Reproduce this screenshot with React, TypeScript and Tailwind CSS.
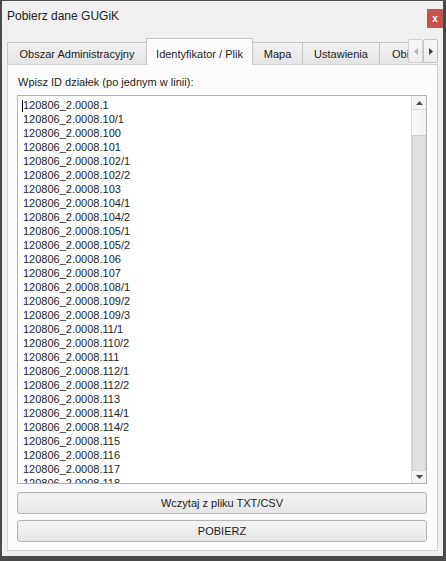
import React from "react";

const ids = [
  "1", "10/1", "100", "101", "102/1", "102/2", "103", "104/1", "104/2", "105/1",
  "105/2", "106", "107", "108/1", "109/2", "109/3", "11/1", "110/2", "111", "112/1",
  "112/2", "113", "114/1", "114/2", "115", "116", "117", "118", "119", "12/1",
];

const font = { fontFamily: '"Liberation Sans", Arial, sans-serif' };

function Arrow({ dir, color }: { dir: "up" | "down" | "left" | "right"; color: string }) {
  const pts = {
    up: "0,4 3.5,0 7,4",
    down: "0,0 3.5,4 7,0",
    left: "4,0 4,7 0,3.5",
    right: "0,0 0,7 4,3.5",
  }[dir];
  const horiz = dir === "left" || dir === "right";
  return (
    <svg width={horiz ? 4 : 7} height={horiz ? 7 : 4} viewBox={horiz ? "0 0 4 7" : "0 0 7 4"}>
      <polygon points={pts} fill={color} />
    </svg>
  );
}

export default function App() {
  return (
    <div
      className="w-[446px] h-[561px] bg-[#f0f0f0] border-t border-l-2 border-r-[3px] border-b-[5px] border-[#4a4a4a] flex flex-col text-[11px] text-[#1c1c1c] overflow-hidden"
      style={font}
    >
      {/* title bar */}
      <div className="h-[37px] flex items-start justify-between pt-[8px] pl-[5px]">
        <span className="text-[12px] leading-[14px] text-[#222]">Pobierz dane GUGiK</span>
        <div className="w-[16px] h-[19px] bg-[#c75050] flex items-center justify-center text-white text-[10px] font-bold leading-none">
          x
        </div>
      </div>

      {/* tabs */}
      <div className="h-[26px] ml-[5px] flex items-end relative z-10">
        <div className="w-[139px] h-[22px] border-l border-t border-[#c4c4c4] bg-gradient-to-b from-[#f1f1f1] to-[#e5e5e5] flex items-end justify-center pb-[3px] leading-[14px]">
          Obszar Administracyjny
        </div>
        <div className="w-[107px] h-[27px] -mb-px border-l border-t border-r border-[#c4c4c4] bg-[#fcfcfc] flex items-end justify-center pb-[4px] leading-[14px]">
          Identyfikator / Plik
        </div>
        <div className="w-[50px] h-[22px] border-t border-r border-[#c4c4c4] bg-gradient-to-b from-[#f1f1f1] to-[#e5e5e5] flex items-end justify-center pb-[3px] leading-[14px]">
          Mapa
        </div>
        <div className="w-[77px] h-[22px] border-t border-r border-[#c4c4c4] bg-gradient-to-b from-[#f1f1f1] to-[#e5e5e5] flex items-end justify-center pb-[3px] leading-[14px]">
          Ustawienia
        </div>
        <div className="w-[28px] h-[22px] border-t border-[#c4c4c4] bg-gradient-to-b from-[#f1f1f1] to-[#e5e5e5] flex items-end pl-[12px] pb-[3px] leading-[14px] overflow-hidden whitespace-nowrap">
          Obiekty
        </div>
        <div className="self-start mt-[1px] flex">
          <div className="w-[15px] h-[24px] border border-[#cfcfcf] rounded-t-[2px] bg-gradient-to-b from-[#f7f7f7] to-[#ececec] flex items-center justify-center">
            <Arrow dir="left" color="#b5b5b5" />
          </div>
          <div className="w-[15px] h-[24px] border border-[#c4c4c4] rounded-t-[2px] bg-gradient-to-b from-[#f7f7f7] to-[#ececec] flex items-center justify-center">
            <Arrow dir="right" color="#3c3c3c" />
          </div>
        </div>
      </div>

      {/* pane */}
      <div className="ml-[5px] w-[431px] h-[487px] border border-[#d2d2d2] bg-[#fcfcfc] flex flex-col pt-[10px] pl-[9px] pr-[10px] pb-[8px]">
        <div className="leading-[14px] pl-[1px]">Wpisz ID działek (po jednym w linii):</div>

        <div className="mt-[6px] w-[410px] h-[389px] border border-[#b4b4b4] bg-white flex">
          <div className="relative flex-1 overflow-hidden pt-[2px] pl-[5px]">
            <span className="absolute left-[4px] top-[4px] w-px h-[12px] bg-black" />
            {ids.map((id) => (
              <div key={id} className="leading-[14px] whitespace-nowrap text-[#1e1e2a]">
                120806_2.0008.{id}
              </div>
            ))}
          </div>
          {/* scrollbar */}
          <div className="w-[15px] flex flex-col border-l border-[#dadada]">
            <div className="h-[14px] bg-[#f4f4f4] border-b border-[#d6d6d6] flex items-center justify-center">
              <Arrow dir="up" color="#4a4a4a" />
            </div>
            <div className="h-[26px] bg-gradient-to-r from-[#fafafa] to-[#f1f1f1] border-b border-[#cfcfcf]" />
            <div className="flex-1 bg-[#e1e1e1] border-x border-[#d0d0d0]" />
            <div className="h-[13px] bg-[#f4f4f4] border-t border-[#d6d6d6] flex items-center justify-center">
              <Arrow dir="down" color="#4a4a4a" />
            </div>
          </div>
        </div>

        <button className="mt-[8px] w-[410px] h-[22px] rounded-[3px] border border-[#b3b3b3] bg-gradient-to-b from-[#f3f3f3] to-[#e6e6e6] text-[11px] leading-[14px] text-[#1c1c1c]">
          Wczytaj z pliku TXT/CSV
        </button>
        <button className="mt-[6px] w-[410px] h-[22px] rounded-[3px] border border-[#b3b3b3] bg-gradient-to-b from-[#f3f3f3] to-[#e6e6e6] text-[11px] leading-[14px] text-[#1c1c1c]">
          POBIERZ
        </button>
      </div>
    </div>
  );
}
